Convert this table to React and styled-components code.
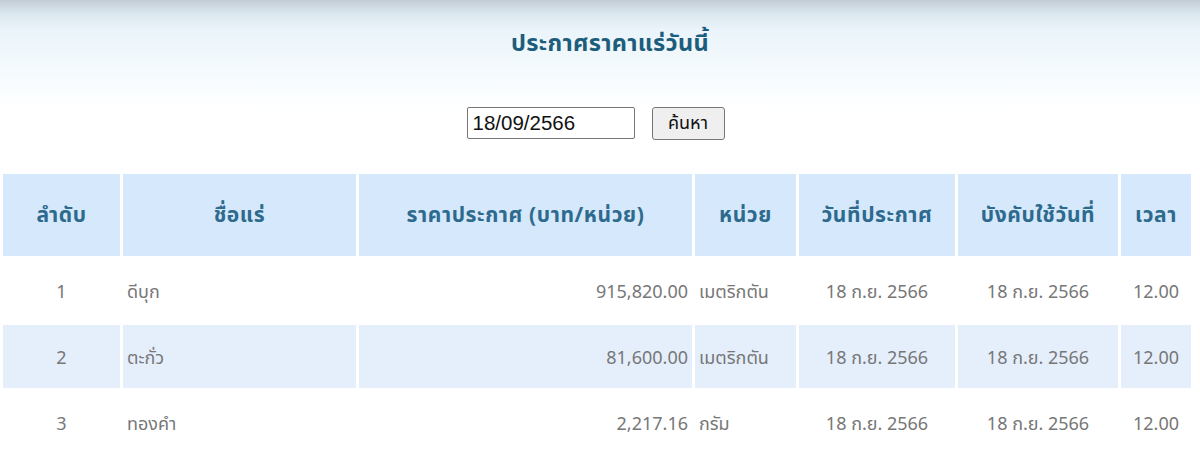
import React, {useState} from 'react';
import styled, {createGlobalStyle} from 'styled-components';

const GlobalStyle = createGlobalStyle`
  html, body {
    margin: 0;
    padding: 0;
    background: #fff;
  }
  body {
    font-family: Tahoma, "Noto Sans Thai", "Noto Sans", "DejaVu Sans", sans-serif;
  }
`;

const Page = styled.div`
  width: 1200px;
  height: 475px;
  overflow: hidden;
  background: linear-gradient(to bottom, #c3ccd5 0px, #dce8f0 14px, #eaf4fa 30px, #f4fafd 70px, #ffffff 110px);
`;

const Title = styled.h1`
  margin: 0;
  padding: 26px 0 0 20px;
  height: 64px;
  text-align: center;
  font-size: 23.5px;
  font-weight: bold;
  color: #1d5d7c;
  letter-spacing: 0.3px;
`;

const SearchBar = styled.form`
  display: flex;
  justify-content: center;
  align-items: center;
  gap: 17px;
  padding: 8px 9px 0 0;
  height: 50px;
`;

const DateInput = styled.input`
  box-sizing: border-box;
  width: 168px;
  height: 32px;
  padding: 0 5px;
  font-size: 20.5px;
  font-family: "Liberation Sans", Arial, sans-serif;
  color: #111;
  border: 1px solid #767676;
  border-radius: 2px;
  outline: none;
`;

const SearchButton = styled.button`
  box-sizing: border-box;
  width: 73px;
  height: 33px;
  padding: 0;
  font-size: 18px;
  font-family: inherit;
  color: #111;
  background: #efefef;
  border: 1px solid #767676;
  border-radius: 3px;
`;

const Table = styled.table`
  width: 1194px;
  border-spacing: 3px;
  border-collapse: separate;
  table-layout: fixed;
  margin-top: 23px;
`;

const HeadCell = styled.th`
  height: 82px;
  padding: 0 4px;
  background: #d6e8fb;
  color: #2d6a8e;
  font-size: 21px;
  font-weight: bold;
  text-align: center;
  letter-spacing: 0.6px;
  white-space: nowrap;
`;

const Row = styled.tr`
  background: ${({striped}) => striped ? '#e5effc' : 'transparent'};
`;

const Cell = styled.td`
  height: 60px;
  padding: 3px 4px 0;
  color: #777;
  font-size: 18px;
  text-align: ${({align}) => align || 'center'};
  white-space: nowrap;
`;

const columns = [
  {label: 'ลำดับ', width: 117},
  {label: 'ชื่อแร่', width: 233},
  {label: 'ราคาประกาศ (บาท/หน่วย)', width: 333},
  {label: 'หน่วย', width: 101},
  {label: 'วันที่ประกาศ', width: 156},
  {label: 'บังคับใช้วันที่', width: 160},
  {label: 'เวลา', width: 70},
];

const rows = [
  {no: 1, name: 'ดีบุก', price: '915,820.00', unit: 'เมตริกตัน'},
  {no: 2, name: 'ตะกั่ว', price: '81,600.00', unit: 'เมตริกตัน'},
  {no: 3, name: 'ทองคำ', price: '2,217.16', unit: 'กรัม'},
];

const App = () => {
  const [date, setDate] = useState('18/09/2566');

  return (
    <Page>
      <GlobalStyle />
      <Title>ประกาศราคาแร่วันนี้</Title>
      <SearchBar onSubmit={e => e.preventDefault()}>
        <DateInput value={date} onChange={({target: {value}}) => setDate(value)} />
        <SearchButton type="submit">ค้นหา</SearchButton>
      </SearchBar>
      <Table>
        <colgroup>
          {columns.map(c => <col key={c.label} style={{width: c.width}} />)}
        </colgroup>
        <thead>
          <tr>
            {columns.map(c => <HeadCell key={c.label}>{c.label}</HeadCell>)}
          </tr>
        </thead>
        <tbody>
          {rows.map((r, idx) => (
            <Row key={r.no} striped={idx % 2 === 1}>
              <Cell>{r.no}</Cell>
              <Cell align="left">{r.name}</Cell>
              <Cell align="right">{r.price}</Cell>
              <Cell align="left">{r.unit}</Cell>
              <Cell>18 ก.ย. 2566</Cell>
              <Cell>18 ก.ย. 2566</Cell>
              <Cell>12.00</Cell>
            </Row>
          ))}
        </tbody>
      </Table>
    </Page>
  );
};

export default App;
